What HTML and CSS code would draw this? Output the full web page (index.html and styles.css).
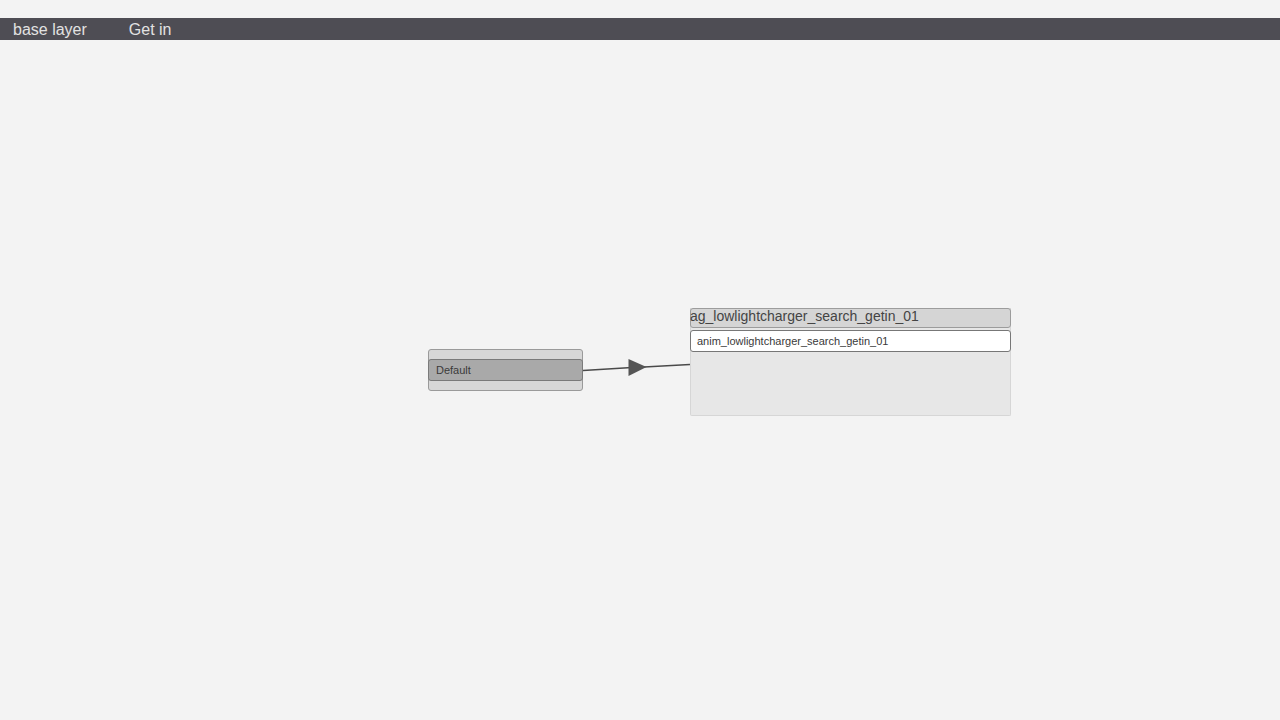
FILE: index.html
```html
<!DOCTYPE html>
<html>
<head>
<meta charset="utf-8">
<link rel="stylesheet" href="styles.css">
</head>
<body>
<div class="page">
  <nav class="topbar">
    <span class="crumb">base layer</span>
    <span class="crumb">Get in</span>
  </nav>
  <div class="canvas">
    <svg class="wire" width="1280" height="720" viewBox="0 0 1280 720">
      <line x1="583" y1="370.5" x2="632" y2="367.5" stroke="#4a4a4a" stroke-width="1.6"/>
      <line x1="644" y1="367" x2="690" y2="364.5" stroke="#4a4a4a" stroke-width="1.6"/>
      <polygon points="628.5,359 628.5,376 646.5,367" fill="#555"/>
    </svg>
    <div class="node node-entry">
      <div class="state">Default</div>
    </div>
    <div class="node node-anim">
      <div class="node-title">ag_lowlightcharger_search_getin_01</div>
      <div class="node-field">anim_lowlightcharger_search_getin_01</div>
    </div>
  </div>
</div>
</body>
</html>
```

FILE: styles.css
```css
html, body {
  margin: 0;
  padding: 0;
  width: 1280px;
  height: 720px;
  overflow: hidden;
  background: #f3f3f3;
  font-family: "Liberation Sans", Arial, sans-serif;
}

.page {
  padding-top: 18px;
  height: 702px;
  display: flex;
  flex-direction: column;
}

.topbar {
  height: 22px;
  background: #4e4d54;
  display: flex;
  align-items: center;
  gap: 42px;
  padding-left: 13px;
  flex-shrink: 0;
}

.crumb {
  color: #e2e2e2;
  font-size: 16px;
  line-height: 22px;
  padding-top: 2px;
}

.canvas {
  position: relative;
  flex: 1;
}

.wire {
  position: absolute;
  left: 0;
  top: -40px;
}

.node {
  position: absolute;
  box-sizing: border-box;
}

.node-entry {
  left: 428px;
  top: 309px;
  width: 155px;
  height: 42px;
  background: #d7d7d7;
  border: 1px solid #9a9a9a;
  border-radius: 3px;
  padding-top: 9px;
}

.state {
  box-sizing: border-box;
  height: 22px;
  margin: 0 -1px;
  background: #a9a9a9;
  border: 1px solid #7a7a7a;
  border-radius: 3px;
  font-size: 11px;
  line-height: 20px;
  color: #3a3a3a;
  padding-left: 7px;
}

.node-anim {
  left: 690px;
  top: 268px;
  width: 321px;
  height: 108px;
  background: #e7e7e7;
  border: 1px solid #d6d6d6;
  border-top: none;
  border-radius: 0 0 2px 2px;
  display: flex;
  flex-direction: column;
  gap: 2px;
}

.node-title {
  box-sizing: border-box;
  height: 20px;
  margin: 0 -1px;
  background: #d5d5d5;
  border: 1px solid #9c9c9c;
  border-radius: 3px;
  font-size: 14px;
  line-height: 14px;
  color: #444;
  white-space: nowrap;
  text-indent: -1px;
}

.node-field {
  box-sizing: border-box;
  height: 22px;
  margin: 0 -1px;
  background: #fff;
  border: 1px solid #777;
  border-radius: 3px;
  font-size: 11px;
  line-height: 20px;
  color: #3a3a3a;
  padding-left: 6px;
  white-space: nowrap;
}
```
